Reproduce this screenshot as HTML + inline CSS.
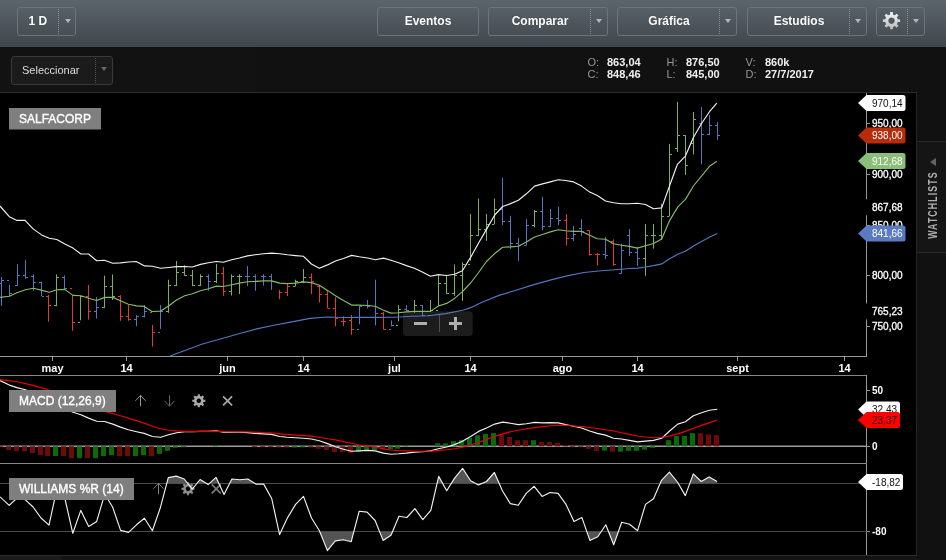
<!DOCTYPE html>
<html lang="es"><head><meta charset="utf-8"><title>SALFACORP</title>
<style>
html,body{margin:0;padding:0}
body{width:946px;height:560px;overflow:hidden;background:#121212;font-family:"Liberation Sans",Arial,sans-serif;position:relative}
.tb{position:absolute;left:0;top:0;width:946px;height:47px;background:linear-gradient(#5d666d,#40484d)}
.btn{position:absolute;top:7px;height:27px;border:1px solid #6d767b;border-radius:3px;color:#fff;font-weight:bold;font-size:12px;line-height:27px;text-align:center;box-sizing:content-box}
.btn span{position:absolute;left:0;top:0;height:27px;text-shadow:0 0 1px rgba(0,0,0,.4)}
.btn i{position:absolute;top:1px;bottom:1px;width:0;border-left:1px dotted #8a9297}
.btn b{position:absolute;top:11px;width:0;height:0;border-left:3.5px solid transparent;border-right:3.5px solid transparent;border-top:4px solid #b4b9bc}
.sub{position:absolute;left:0;top:47px;width:946px;height:45px;background:#121212}
.sel{position:absolute;left:11px;top:56px;width:100px;height:27px;border:1px solid #3a3a3a;border-radius:3px;background:#1c1c1c;color:#ddd;font-size:11px;line-height:27px}
.sel span{position:absolute;left:10px;top:0}
.sel i{position:absolute;left:83px;top:1px;bottom:1px;width:0;border-left:1px dotted #555}
.sel b{position:absolute;left:88.5px;top:10px;width:0;height:0;border-left:3.5px solid transparent;border-right:3.5px solid transparent;border-top:4px solid #666}
.ohlc{position:absolute;top:56px;font-size:11px;line-height:12px;color:#999;white-space:pre}
.ohlc b{color:#f0f0f0;position:absolute;left:19.5px}
.ohlc div{position:relative;height:12px}
.hr{position:absolute;left:0;top:92px;width:917px;height:1px;background:#2e2e2e}
.chart{position:absolute;left:0;top:93px}
.side{position:absolute;left:916px;top:93px;width:30px;height:467px;background:#121212;border-left:1px solid #262626;box-sizing:border-box}
.tab{position:absolute;left:0;top:48px;width:29px;height:110px;background:#161616;border-top:1px solid #2a2a2a;border-bottom:1px solid #2a2a2a}
.tab span{position:absolute;left:-26px;top:48px;width:80px;height:14px;transform:rotate(-90deg);font-size:10px;font-weight:bold;letter-spacing:1px;color:#9a9a9a;line-height:14px;text-align:center;white-space:nowrap}
.tab b{position:absolute;left:12.5px;top:15.8px;width:0;height:0;border-top:4.2px solid transparent;border-bottom:4.2px solid transparent;border-right:6.5px solid #666}
.bot{position:absolute;left:0;top:555px;width:917px;height:5px;background:#151515;border-top:1px solid #2c2c2c;box-sizing:border-box}
.bot i{position:absolute;left:0;top:0;width:61px;height:4px;background:#1c1c1c}
#wrap{position:absolute;left:0;top:0;width:946px;height:560px;will-change:transform;opacity:.999}
</style></head><body>
<div id="wrap">
<div class="tb">
 <div class="btn" style="left:17px;width:57px"><span style="width:39.5px">1 D</span><i style="left:40px"></i><b style="left:46.5px"></b></div>
 <div class="btn" style="left:377px;width:100px"><span style="width:100px">Eventos</span></div>
 <div class="btn" style="left:488px;width:118px"><span style="width:102px">Comparar</span><i style="left:100.5px"></i><b style="left:107px"></b></div>
 <div class="btn" style="left:617px;width:118px"><span style="width:102px">Gráfica</span><i style="left:100.5px"></i><b style="left:107px"></b></div>
 <div class="btn" style="left:747px;width:118px"><span style="width:102px">Estudios</span><i style="left:100.5px"></i><b style="left:107px"></b></div>
 <div class="btn" style="left:876px;width:47px"><svg width="31" height="27" viewBox="-15.5 -12.7 31 27" style="position:absolute;left:-1px;top:0"><defs><linearGradient id="gg" x1="0" y1="0" x2="0" y2="1"><stop offset="0" stop-color="#f4f4f4"/><stop offset="1" stop-color="#b8bcbf"/></linearGradient></defs><path d="M-1.40,-6.25L-1.29,-8.60L1.29,-8.60L1.40,-6.25L3.43,-5.40L5.17,-7.00L7.00,-5.17L5.40,-3.43L6.25,-1.40L8.60,-1.29L8.60,1.29L6.25,1.40L5.40,3.43L7.00,5.17L5.17,7.00L3.43,5.40L1.40,6.25L1.29,8.60L-1.29,8.60L-1.40,6.25L-3.43,5.40L-5.17,7.00L-7.00,5.17L-5.40,3.43L-6.25,1.40L-8.60,1.29L-8.60,-1.29L-6.25,-1.40L-5.40,-3.43L-7.00,-5.17L-5.17,-7.00L-3.43,-5.40ZM0,-3.2a3.2,3.2 0 1 0 .01,0z" fill="url(#gg)" fill-rule="evenodd"/></svg><i style="left:29.5px"></i><b style="left:36px"></b></div>
</div>
<div class="sub"></div>
<div class="sel"><span>Seleccionar</span><i></i><b></b></div>
<div class="ohlc" style="left:587.5px"><div>O:<b>863,04</b></div><div>C:<b>848,46</b></div></div>
<div class="ohlc" style="left:666.5px"><div>H:<b>876,50</b></div><div>L:<b>845,00</b></div></div>
<div class="ohlc" style="left:745.5px"><div>V:<b>860k</b></div><div>D:<b>27/7/2017</b></div></div>
<div class="hr"></div>
<svg class="chart" width="917" height="464" viewBox="0 93 917 464" font-family="'Liberation Sans', Arial, sans-serif">
<rect x="0" y="93" width="916" height="463" fill="#000"/>
<g stroke="#999" stroke-width="1" shape-rendering="crispEdges" fill="none">
<line x1="0" y1="356.5" x2="867" y2="356.5"/>
<line x1="866.5" y1="93" x2="866.5" y2="356"/>
<line x1="0" y1="375.5" x2="867" y2="375.5" stroke="#888"/>
<line x1="866.5" y1="375" x2="866.5" y2="556"/>
<line x1="0" y1="463.5" x2="867" y2="463.5" stroke="#888"/>
<line x1="52.5" y1="357" x2="52.5" y2="361"/>
<line x1="126.5" y1="357" x2="126.5" y2="361"/>
<line x1="227.5" y1="357" x2="227.5" y2="361"/>
<line x1="303.5" y1="357" x2="303.5" y2="361"/>
<line x1="394.5" y1="357" x2="394.5" y2="361"/>
<line x1="470.5" y1="357" x2="470.5" y2="361"/>
<line x1="562.5" y1="357" x2="562.5" y2="361"/>
<line x1="637.5" y1="357" x2="637.5" y2="361"/>
<line x1="737.5" y1="357" x2="737.5" y2="361"/>
<line x1="844.5" y1="357" x2="844.5" y2="361"/>
<line x1="867" y1="123.5" x2="870" y2="123.5"/>
<line x1="867" y1="174.5" x2="870" y2="174.5"/>
<line x1="867" y1="225.5" x2="870" y2="225.5"/>
<line x1="867" y1="275.5" x2="870" y2="275.5"/>
<line x1="867" y1="326.5" x2="870" y2="326.5"/>
<line x1="867" y1="390.5" x2="870" y2="390.5"/>
<line x1="867" y1="446.5" x2="870" y2="446.5"/>
<line x1="867" y1="531.5" x2="870" y2="531.5"/>
</g>
<rect x="403" y="311.3" width="69.7" height="24.7" rx="3.5" fill="#1d1d1d"/>
<rect x="414" y="322" width="13" height="3" fill="#b0b0b0"/>
<rect x="439" y="315" width="1" height="17" fill="#505050"/>
<rect x="449" y="322" width="13" height="3" fill="#b0b0b0"/><rect x="454" y="317" width="3" height="13" fill="#b0b0b0"/>
<path d="M1.5 277.0V305.9M-1.0 283.5H1.0M2.0 280.5H4.0" stroke="#5677c2" stroke-width="1" fill="none"/>
<path d="M9.5 284.7V296.6M7.0 280.5H9.0M10.0 293.5H12.0" stroke="#5677c2" stroke-width="1" fill="none"/>
<path d="M17.5 264.3V285.9M15.0 285.5H17.0M18.0 275.5H20.0" stroke="#5677c2" stroke-width="1" fill="none"/>
<path d="M25.5 260.1V278.8M23.0 275.5H25.0M26.0 277.5H28.0" stroke="#5677c2" stroke-width="1" fill="none"/>
<path d="M33.5 274.5V290.6M31.0 276.5H33.0M34.0 282.5H36.0" stroke="#5677c2" stroke-width="1" fill="none"/>
<path d="M41.5 281.6V296.2M39.0 282.5H41.0M42.0 296.5H44.0" stroke="#5677c2" stroke-width="1" fill="none"/>
<path d="M48.5 294.9V321.7M46.0 296.5H48.0M49.0 305.5H51.0" stroke="#e23b30" stroke-width="1" fill="none"/>
<path d="M56.5 274.5V306.2M54.0 305.5H56.0M57.0 277.5H59.0" stroke="#7ab35c" stroke-width="1" fill="none"/>
<path d="M64.5 275.4V288.9M62.0 277.5H64.0M65.0 288.5H67.0" stroke="#5677c2" stroke-width="1" fill="none"/>
<path d="M72.5 295.2V330.8M70.0 288.5H72.0M73.0 322.5H75.0" stroke="#e23b30" stroke-width="1" fill="none"/>
<path d="M80.5 295.7V320.3M78.0 322.5H80.0M81.0 296.5H83.0" stroke="#7ab35c" stroke-width="1" fill="none"/>
<path d="M88.5 285.0V319.5M86.0 296.5H88.0M89.0 311.5H91.0" stroke="#e23b30" stroke-width="1" fill="none"/>
<path d="M96.5 297.1V318.6M94.0 311.5H96.0M97.0 307.5H99.0" stroke="#5677c2" stroke-width="1" fill="none"/>
<path d="M104.5 275.7V307.9M102.0 307.5H104.0M105.0 286.5H107.0" stroke="#7ab35c" stroke-width="1" fill="none"/>
<path d="M112.5 274.5V300.0M110.0 286.5H112.0M113.0 296.5H115.0" stroke="#7ab35c" stroke-width="1" fill="none"/>
<path d="M120.5 295.2V320.8M118.0 296.5H120.0M121.0 316.5H123.0" stroke="#e23b30" stroke-width="1" fill="none"/>
<path d="M128.5 305.0V320.8M126.0 316.5H128.0M129.0 319.5H131.0" stroke="#e23b30" stroke-width="1" fill="none"/>
<path d="M136.5 315.2V326.3M134.0 319.5H136.0M137.0 316.5H139.0" stroke="#5677c2" stroke-width="1" fill="none"/>
<path d="M144.5 305.0V317.4M142.0 316.5H144.0M145.0 311.5H147.0" stroke="#5677c2" stroke-width="1" fill="none"/>
<path d="M152.5 325.0V346.6M150.0 312.5H152.0M153.0 332.5H155.0" stroke="#e23b30" stroke-width="1" fill="none"/>
<path d="M160.5 305.1V328.9M158.0 332.5H160.0M161.0 311.5H163.0" stroke="#5677c2" stroke-width="1" fill="none"/>
<path d="M168.5 279.7V312.8M166.0 311.5H168.0M169.0 285.5H171.0" stroke="#7ab35c" stroke-width="1" fill="none"/>
<path d="M176.5 261.0V286.1M174.0 285.5H176.0M177.0 272.5H179.0" stroke="#7ab35c" stroke-width="1" fill="none"/>
<path d="M184.5 265.3V275.8M182.0 272.5H184.0M185.0 275.5H187.0" stroke="#7ab35c" stroke-width="1" fill="none"/>
<path d="M192.5 270.0V286.1M190.0 275.5H192.0M193.0 285.5H195.0" stroke="#7ab35c" stroke-width="1" fill="none"/>
<path d="M200.5 274.3V286.1M198.0 285.5H200.0M201.0 276.5H203.0" stroke="#7ab35c" stroke-width="1" fill="none"/>
<path d="M208.5 274.3V290.7M206.0 276.5H208.0M209.0 281.5H211.0" stroke="#5677c2" stroke-width="1" fill="none"/>
<path d="M216.5 263.9V283.1M214.0 281.5H216.0M217.0 273.5H219.0" stroke="#7ab35c" stroke-width="1" fill="none"/>
<path d="M223.5 267.0V295.8M221.0 273.5H223.0M224.0 291.5H226.0" stroke="#e23b30" stroke-width="1" fill="none"/>
<path d="M231.5 274.3V295.5M229.0 291.5H231.0M232.0 276.5H234.0" stroke="#7ab35c" stroke-width="1" fill="none"/>
<path d="M239.5 274.3V294.1M237.0 276.5H239.0M240.0 276.5H242.0" stroke="#7ab35c" stroke-width="1" fill="none"/>
<path d="M247.5 266.1V286.0M245.0 276.5H247.0M248.0 276.5H250.0" stroke="#5677c2" stroke-width="1" fill="none"/>
<path d="M255.5 274.3V290.7M253.0 276.5H255.0M256.0 281.5H258.0" stroke="#5677c2" stroke-width="1" fill="none"/>
<path d="M263.5 274.3V285.6M261.0 276.5H263.0M264.0 276.5H266.0" stroke="#5677c2" stroke-width="1" fill="none"/>
<path d="M271.5 273.8V289.9M269.0 276.5H271.0M272.0 281.5H274.0" stroke="#5677c2" stroke-width="1" fill="none"/>
<path d="M279.5 289.9V299.2M277.0 282.5H279.0M280.0 292.5H282.0" stroke="#e23b30" stroke-width="1" fill="none"/>
<path d="M287.5 283.1V296.1M285.0 292.5H287.0M288.0 286.5H290.0" stroke="#e23b30" stroke-width="1" fill="none"/>
<path d="M295.5 279.7V286.5M293.0 286.5H295.0M296.0 281.5H298.0" stroke="#7ab35c" stroke-width="1" fill="none"/>
<path d="M303.5 269.0V283.1M301.0 281.5H303.0M304.0 277.5H306.0" stroke="#7ab35c" stroke-width="1" fill="none"/>
<path d="M311.5 273.4V294.1M309.0 277.5H311.0M312.0 281.5H314.0" stroke="#e23b30" stroke-width="1" fill="none"/>
<path d="M319.5 284.8V302.6M317.0 286.5H319.0M320.0 294.5H322.0" stroke="#e23b30" stroke-width="1" fill="none"/>
<path d="M327.5 289.9V308.5M325.0 294.5H327.0M328.0 308.5H330.0" stroke="#e23b30" stroke-width="1" fill="none"/>
<path d="M335.5 297.5V326.3M333.0 308.5H335.0M336.0 318.5H338.0" stroke="#e23b30" stroke-width="1" fill="none"/>
<path d="M343.5 316.2V326.3M341.0 321.5H343.0M344.0 321.5H346.0" stroke="#e23b30" stroke-width="1" fill="none"/>
<path d="M351.5 315.0V334.8M349.0 320.5H351.0M352.0 329.5H354.0" stroke="#e23b30" stroke-width="1" fill="none"/>
<path d="M359.5 306.0V324.3M357.0 329.5H359.0M360.0 306.5H362.0" stroke="#5677c2" stroke-width="1" fill="none"/>
<path d="M367.5 300.0V308.5M365.0 305.5H367.0M368.0 306.5H370.0" stroke="#5677c2" stroke-width="1" fill="none"/>
<path d="M375.5 279.7V325.5M376.0 313.5H378.0" stroke="#5677c2" stroke-width="1" fill="none"/>
<path d="M383.5 311.9V329.7M381.0 313.5H383.0M384.0 329.5H386.0" stroke="#e23b30" stroke-width="1" fill="none"/>
<path d="M391.5 320.4V326.3M389.0 329.5H391.0M392.0 325.5H394.0" stroke="#5677c2" stroke-width="1" fill="none"/>
<path d="M398.5 305.1V321.3M396.0 325.5H398.0M399.0 309.5H401.0" stroke="#7ab35c" stroke-width="1" fill="none"/>
<path d="M406.5 305.1V311.1M404.0 309.5H406.0M407.0 310.5H409.0" stroke="#5677c2" stroke-width="1" fill="none"/>
<path d="M414.5 300.0V312.8M412.0 311.5H414.0M415.0 305.5H417.0" stroke="#7ab35c" stroke-width="1" fill="none"/>
<path d="M422.5 305.1V316.2M420.0 305.5H422.0M423.0 315.5H425.0" stroke="#5677c2" stroke-width="1" fill="none"/>
<path d="M430.5 300.0V311.9M428.0 315.5H430.0M431.0 310.5H433.0" stroke="#7ab35c" stroke-width="1" fill="none"/>
<path d="M438.5 275.5V306.0M436.0 310.5H438.0M439.0 283.5H441.0" stroke="#7ab35c" stroke-width="1" fill="none"/>
<path d="M446.5 275.5V294.1M444.0 283.5H446.0M447.0 293.5H449.0" stroke="#7ab35c" stroke-width="1" fill="none"/>
<path d="M454.5 264.4V295.8M452.0 293.5H454.0M455.0 275.5H457.0" stroke="#7ab35c" stroke-width="1" fill="none"/>
<path d="M462.5 262.2V300.9M460.0 275.5H462.0M463.0 264.5H465.0" stroke="#7ab35c" stroke-width="1" fill="none"/>
<path d="M470.5 214.1V260.6M468.0 264.5H470.0M471.0 235.5H473.0" stroke="#7ab35c" stroke-width="1" fill="none"/>
<path d="M478.5 198.5V236.2M476.0 235.5H478.0M479.0 229.5H481.0" stroke="#7ab35c" stroke-width="1" fill="none"/>
<path d="M486.5 214.1V240.9M484.0 229.5H486.0M487.0 224.5H489.0" stroke="#7ab35c" stroke-width="1" fill="none"/>
<path d="M494.5 198.5V224.3M492.0 224.5H494.0M495.0 209.5H497.0" stroke="#7ab35c" stroke-width="1" fill="none"/>
<path d="M502.5 178.0V225.1M500.0 209.5H502.0M503.0 221.5H505.0" stroke="#5677c2" stroke-width="1" fill="none"/>
<path d="M510.5 215.8V248.9M508.0 221.5H510.0M511.0 243.5H513.0" stroke="#5677c2" stroke-width="1" fill="none"/>
<path d="M518.5 237.9V260.8M516.0 243.5H518.0M519.0 245.5H521.0" stroke="#5677c2" stroke-width="1" fill="none"/>
<path d="M526.5 219.2V245.5M524.0 245.5H526.0M527.0 225.5H529.0" stroke="#5677c2" stroke-width="1" fill="none"/>
<path d="M534.5 209.9V227.3M532.0 225.5H534.0M535.0 211.5H537.0" stroke="#7ab35c" stroke-width="1" fill="none"/>
<path d="M542.5 196.8V230.2M540.0 211.5H542.0M543.0 226.5H545.0" stroke="#5677c2" stroke-width="1" fill="none"/>
<path d="M550.5 209.0V226.8M548.0 226.5H550.0M551.0 218.5H553.0" stroke="#5677c2" stroke-width="1" fill="none"/>
<path d="M558.5 206.5V225.1M556.0 218.5H558.0M559.0 220.5H561.0" stroke="#5677c2" stroke-width="1" fill="none"/>
<path d="M566.5 214.1V245.5M564.0 220.5H566.0M567.0 238.5H569.0" stroke="#e23b30" stroke-width="1" fill="none"/>
<path d="M573.5 226.0V240.9M571.0 238.5H573.0M574.0 234.5H576.0" stroke="#5677c2" stroke-width="1" fill="none"/>
<path d="M581.5 219.2V235.8M579.0 228.5H581.0M582.0 231.5H584.0" stroke="#5677c2" stroke-width="1" fill="none"/>
<path d="M589.5 230.2V255.7M587.0 230.5H589.0M590.0 254.5H592.0" stroke="#e23b30" stroke-width="1" fill="none"/>
<path d="M597.5 252.8V265.7M595.0 254.5H597.0M598.0 254.5H600.0" stroke="#e23b30" stroke-width="1" fill="none"/>
<path d="M605.5 237.0V259.1M603.0 254.5H605.0M606.0 255.5H608.0" stroke="#5677c2" stroke-width="1" fill="none"/>
<path d="M613.5 239.4V265.7M611.0 241.5H613.0M614.0 264.5H616.0" stroke="#e23b30" stroke-width="1" fill="none"/>
<path d="M621.5 243.7V273.9M619.0 273.5H621.0M622.0 250.5H624.0" stroke="#5677c2" stroke-width="1" fill="none"/>
<path d="M629.5 229.1V255.9M627.0 235.5H629.0M630.0 252.5H632.0" stroke="#5677c2" stroke-width="1" fill="none"/>
<path d="M637.5 246.9V266.1M635.0 252.5H637.0M638.0 258.5H640.0" stroke="#5677c2" stroke-width="1" fill="none"/>
<path d="M645.5 224.0V275.8M643.0 258.5H645.0M646.0 235.5H648.0" stroke="#7ab35c" stroke-width="1" fill="none"/>
<path d="M653.5 224.0V248.6M651.0 235.5H653.0M654.0 235.5H656.0" stroke="#7ab35c" stroke-width="1" fill="none"/>
<path d="M661.5 203.7V240.1M659.0 235.5H661.0M662.0 216.5H664.0" stroke="#7ab35c" stroke-width="1" fill="none"/>
<path d="M669.5 143.9V216.4M667.0 216.5H669.0M670.0 154.5H672.0" stroke="#7ab35c" stroke-width="1" fill="none"/>
<path d="M677.5 101.8V152.0M675.0 148.5H677.0M678.0 135.5H680.0" stroke="#7ab35c" stroke-width="1" fill="none"/>
<path d="M685.5 135.1V174.8M683.0 135.5H685.0M686.0 165.5H688.0" stroke="#7ab35c" stroke-width="1" fill="none"/>
<path d="M693.5 112.0V154.4M691.0 143.5H693.0M694.0 119.5H696.0" stroke="#7ab35c" stroke-width="1" fill="none"/>
<path d="M701.5 107.1V164.3M699.0 123.5H701.0M702.0 134.5H704.0" stroke="#5677c2" stroke-width="1" fill="none"/>
<path d="M709.5 115.1V135.1M707.0 134.5H709.0M710.0 125.5H712.0" stroke="#5677c2" stroke-width="1" fill="none"/>
<path d="M717.5 122.2V139.7M715.0 125.5H717.0M718.0 135.5H720.0" stroke="#5677c2" stroke-width="1" fill="none"/>
<polyline points="170.0,356.0 201.7,344.2 222.9,338.2 239.8,333.5 256.8,328.9 273.8,325.2 290.7,322.1 310.0,318.4 327.0,317.0 344.0,317.5 361.0,317.4 378.0,317.4 395.0,317.2 411.8,316.2 428.8,315.8 445.7,313.6 462.7,310.2 470.0,307.9 482.0,302.2 499.0,295.4 516.0,290.3 533.0,284.9 550.0,280.1 567.0,275.9 584.0,272.5 601.0,270.8 615.0,269.8 621.4,269.3 629.4,268.5 637.4,268.1 645.5,267.0 653.5,265.6 661.7,263.9 669.6,258.8 677.7,254.2 685.4,251.2 693.9,245.7 701.5,241.5 709.2,237.3 717.3,233.4" fill="none" stroke="#5677c2" stroke-width="1.15" stroke-linejoin="round"/>
<polyline points="0.0,297.4 9.3,296.2 17.0,292.7 25.4,289.8 33.4,288.3 41.2,290.1 49.2,292.3 56.8,289.8 64.8,289.4 73.0,295.4 80.9,295.7 88.6,298.3 96.7,300.5 104.7,297.4 112.8,297.4 120.5,300.8 128.4,304.2 136.6,305.9 144.2,306.4 151.9,311.5 160.6,311.1 168.6,306.0 176.5,300.0 184.7,295.8 192.3,293.8 200.5,290.7 208.4,288.7 216.4,286.1 223.4,286.5 231.7,284.8 239.5,283.1 247.5,281.7 255.4,281.4 263.6,280.9 271.6,280.9 279.7,283.1 287.3,283.6 295.5,283.1 303.5,281.9 311.4,282.6 319.3,285.3 327.5,290.4 335.4,295.8 343.4,300.6 351.6,305.1 359.2,305.1 367.7,305.5 375.3,306.3 383.5,310.2 390.9,313.1 398.6,312.8 406.4,311.9 414.3,311.4 422.3,311.4 430.5,311.4 438.4,306.0 446.6,303.4 454.6,298.4 462.4,291.6 470.6,283.0 478.6,272.5 486.5,261.5 494.7,253.5 502.7,247.3 510.5,246.9 518.4,246.3 526.4,242.1 534.6,237.0 542.5,234.5 550.3,231.9 558.3,229.7 565.6,230.7 573.6,231.4 581.6,231.4 589.7,235.3 597.3,238.7 605.5,239.2 613.5,243.8 621.4,245.2 629.4,246.4 637.4,248.1 645.5,245.7 653.5,243.5 661.7,239.0 669.6,220.6 677.7,207.1 685.4,199.4 693.4,186.0 701.5,176.1 709.5,166.3 716.8,161.2" fill="none" stroke="#86bd6b" stroke-width="1.15" stroke-linejoin="round"/>
<polyline points="0.0,206.0 9.3,216.7 17.0,220.4 25.1,220.4 33.1,228.9 41.6,234.9 49.2,238.3 56.8,239.5 65.3,244.2 73.0,248.1 80.9,254.0 88.6,254.0 96.7,260.7 104.3,260.3 112.8,263.2 120.5,262.9 128.4,262.0 136.2,261.5 144.6,265.9 152.4,266.3 160.6,268.3 168.6,267.5 176.5,266.6 184.7,266.5 192.3,267.0 200.5,264.4 208.4,262.7 216.4,261.5 223.4,262.2 231.7,259.8 239.5,258.0 247.5,255.9 255.4,254.8 263.6,253.7 271.6,253.1 279.7,253.7 287.3,254.8 295.5,255.6 303.5,256.3 311.4,264.0 319.3,268.3 327.5,264.9 335.4,261.0 343.4,258.5 351.6,255.4 359.2,256.8 367.7,258.0 375.3,259.8 383.5,258.1 390.9,260.2 398.6,262.7 406.4,265.6 414.3,268.3 422.3,272.1 430.5,276.3 438.4,274.6 446.6,275.5 454.6,274.3 462.4,270.7 470.6,257.4 478.6,243.0 486.5,229.4 494.7,215.0 502.7,206.5 510.5,203.6 518.4,200.2 526.4,193.8 534.6,186.1 542.5,183.9 550.3,181.9 558.3,179.8 565.6,180.5 573.6,181.9 581.6,186.1 589.7,192.1 597.3,195.5 605.5,201.0 613.5,202.7 621.4,203.7 629.4,203.7 637.4,203.3 645.5,204.5 653.5,208.8 661.7,207.9 669.6,185.8 677.4,164.3 685.4,156.1 693.4,137.5 701.5,123.5 709.5,111.7 716.8,103.2" fill="none" stroke="#f2f2f2" stroke-width="1.15" stroke-linejoin="round"/>
<line x1="0" y1="446.3" x2="867" y2="446.3" stroke="#9c9c9c" stroke-width="1.5"/>
<rect x="-2" y="446.3" width="5" height="1.0" fill="#6e0b0b"/>
<rect x="6" y="446.3" width="5" height="3.7" fill="#6e0b0b"/>
<rect x="14" y="446.3" width="5" height="4.9" fill="#6e0b0b"/>
<rect x="22" y="446.3" width="5" height="4.9" fill="#6e0b0b"/>
<rect x="30" y="446.3" width="5" height="6.8" fill="#6e0b0b"/>
<rect x="38" y="446.3" width="5" height="8.8" fill="#6e0b0b"/>
<rect x="45" y="446.3" width="5" height="9.7" fill="#6e0b0b"/>
<rect x="53" y="446.3" width="5" height="9.7" fill="#0b6b0b"/>
<rect x="61" y="446.3" width="5" height="9.7" fill="#6e0b0b"/>
<rect x="69" y="446.3" width="5" height="11.9" fill="#6e0b0b"/>
<rect x="77" y="446.3" width="5" height="11.9" fill="#0b6b0b"/>
<rect x="85" y="446.3" width="5" height="11.9" fill="#6e0b0b"/>
<rect x="93" y="446.3" width="5" height="11.9" fill="#0b6b0b"/>
<rect x="101" y="446.3" width="5" height="9.7" fill="#0b6b0b"/>
<rect x="109" y="446.3" width="5" height="8.8" fill="#0b6b0b"/>
<rect x="117" y="446.3" width="5" height="9.7" fill="#6e0b0b"/>
<rect x="125" y="446.3" width="5" height="9.7" fill="#6e0b0b"/>
<rect x="133" y="446.3" width="5" height="9.7" fill="#0b6b0b"/>
<rect x="141" y="446.3" width="5" height="8.8" fill="#0b6b0b"/>
<rect x="149" y="446.3" width="5" height="9.7" fill="#6e0b0b"/>
<rect x="157" y="446.3" width="5" height="7.5" fill="#0b6b0b"/>
<rect x="165" y="446.3" width="5" height="4.6" fill="#0b6b0b"/>
<rect x="173" y="446.3" width="5" height="1.5" fill="#0b6b0b"/>
<rect x="181" y="446.3" width="5" height="1.0" fill="#0b6b0b"/>
<rect x="213" y="445.2" width="5" height="1.1" fill="#0b6b0b"/>
<rect x="252" y="446.3" width="5" height="1.0" fill="#6e0b0b"/>
<rect x="260" y="446.3" width="5" height="1.0" fill="#6e0b0b"/>
<rect x="268" y="446.3" width="5" height="1.0" fill="#6e0b0b"/>
<rect x="276" y="446.3" width="5" height="1.3" fill="#6e0b0b"/>
<rect x="284" y="446.3" width="5" height="1.3" fill="#6e0b0b"/>
<rect x="292" y="446.3" width="5" height="1.3" fill="#0b6b0b"/>
<rect x="300" y="446.3" width="5" height="1.1" fill="#0b6b0b"/>
<rect x="308" y="446.3" width="5" height="1.3" fill="#6e0b0b"/>
<rect x="316" y="446.3" width="5" height="2.6" fill="#6e0b0b"/>
<rect x="324" y="446.3" width="5" height="3.7" fill="#6e0b0b"/>
<rect x="332" y="446.3" width="5" height="5.8" fill="#6e0b0b"/>
<rect x="340" y="446.3" width="5" height="5.8" fill="#6e0b0b"/>
<rect x="348" y="446.3" width="5" height="6.8" fill="#6e0b0b"/>
<rect x="356" y="446.3" width="5" height="5.4" fill="#0b6b0b"/>
<rect x="364" y="446.3" width="5" height="3.7" fill="#0b6b0b"/>
<rect x="372" y="446.3" width="5" height="3.7" fill="#0b6b0b"/>
<rect x="380" y="446.3" width="5" height="3.2" fill="#6e0b0b"/>
<rect x="388" y="446.3" width="5" height="2.9" fill="#0b6b0b"/>
<rect x="395" y="446.3" width="5" height="2.4" fill="#0b6b0b"/>
<rect x="403" y="445.3" width="5" height="1.0" fill="#0b6b0b"/>
<rect x="435" y="443.3" width="5" height="3.0" fill="#0b6b0b"/>
<rect x="443" y="443.3" width="5" height="3.0" fill="#0b6b0b"/>
<rect x="451" y="441.1" width="5" height="5.2" fill="#0b6b0b"/>
<rect x="459" y="439.9" width="5" height="6.4" fill="#0b6b0b"/>
<rect x="467" y="437.8" width="5" height="8.5" fill="#0b6b0b"/>
<rect x="475" y="435.3" width="5" height="11.0" fill="#0b6b0b"/>
<rect x="483" y="433.9" width="5" height="12.4" fill="#0b6b0b"/>
<rect x="491" y="433.1" width="5" height="13.2" fill="#0b6b0b"/>
<rect x="499" y="434.3" width="5" height="12.0" fill="#6e0b0b"/>
<rect x="507" y="437.0" width="5" height="9.3" fill="#6e0b0b"/>
<rect x="515" y="440.2" width="5" height="6.1" fill="#6e0b0b"/>
<rect x="523" y="440.2" width="5" height="6.1" fill="#6e0b0b"/>
<rect x="531" y="440.2" width="5" height="6.1" fill="#0b6b0b"/>
<rect x="539" y="441.9" width="5" height="4.4" fill="#6e0b0b"/>
<rect x="547" y="441.9" width="5" height="4.4" fill="#6e0b0b"/>
<rect x="555" y="442.9" width="5" height="3.4" fill="#6e0b0b"/>
<rect x="563" y="445.0" width="5" height="1.3" fill="#6e0b0b"/>
<rect x="570" y="446.3" width="5" height="1.0" fill="#6e0b0b"/>
<rect x="578" y="446.3" width="5" height="1.0" fill="#6e0b0b"/>
<rect x="586" y="446.3" width="5" height="2.6" fill="#6e0b0b"/>
<rect x="594" y="446.3" width="5" height="4.6" fill="#6e0b0b"/>
<rect x="602" y="446.3" width="5" height="4.3" fill="#0b6b0b"/>
<rect x="610" y="446.3" width="5" height="5.4" fill="#6e0b0b"/>
<rect x="618" y="446.3" width="5" height="5.4" fill="#0b6b0b"/>
<rect x="626" y="446.3" width="5" height="4.6" fill="#0b6b0b"/>
<rect x="634" y="446.3" width="5" height="4.6" fill="#0b6b0b"/>
<rect x="642" y="446.3" width="5" height="3.4" fill="#0b6b0b"/>
<rect x="650" y="446.3" width="5" height="1.5" fill="#0b6b0b"/>
<rect x="666" y="440.2" width="5" height="6.1" fill="#0b6b0b"/>
<rect x="674" y="436.0" width="5" height="10.3" fill="#0b6b0b"/>
<rect x="682" y="436.0" width="5" height="10.3" fill="#0b6b0b"/>
<rect x="690" y="433.1" width="5" height="13.2" fill="#0b6b0b"/>
<rect x="698" y="433.1" width="5" height="13.2" fill="#6e0b0b"/>
<rect x="706" y="434.3" width="5" height="12.0" fill="#6e0b0b"/>
<rect x="714" y="435.1" width="5" height="11.2" fill="#6e0b0b"/>
<polyline points="0.0,380.5 9.3,385.1 17.0,387.6 25.4,389.8 33.4,392.5 41.3,396.5 49.2,400.5 57.2,404.5 65.1,408.5 73.0,412.2 80.9,414.8 88.6,418.1 96.7,421.2 104.7,421.5 112.8,424.1 120.5,427.1 128.4,429.7 136.6,431.7 144.2,433.4 152.4,436.5 160.6,437.3 168.6,434.8 176.5,432.7 184.7,431.7 192.3,431.7 200.5,431.4 208.4,431.4 216.4,430.9 223.4,432.2 231.7,432.2 239.5,432.2 247.5,432.6 255.4,433.4 263.6,433.9 271.6,434.4 279.7,436.5 287.3,437.3 295.5,437.8 303.5,438.2 311.4,439.0 319.3,440.7 327.5,443.6 335.4,446.7 343.4,449.2 351.6,451.2 359.2,450.9 367.7,450.4 375.3,450.9 383.5,453.1 390.9,454.3 398.6,453.8 406.4,453.1 414.3,452.1 422.3,451.7 430.5,450.9 438.4,448.7 446.6,447.0 454.6,444.6 462.4,441.2 470.6,436.5 478.6,431.4 486.5,428.0 494.7,424.1 502.7,422.1 510.5,423.2 518.4,424.6 526.4,423.7 534.6,422.4 542.5,422.9 550.3,422.6 558.3,422.9 565.6,424.6 573.6,426.3 581.6,428.0 589.7,431.0 597.3,433.4 605.5,435.1 613.5,438.2 621.4,439.0 629.4,440.4 637.4,441.9 645.5,441.1 653.5,440.4 661.7,438.2 669.6,431.0 677.7,424.1 685.4,421.7 693.4,415.8 701.5,412.7 709.5,410.2 717.3,409.3" fill="none" stroke="#f2f2f2" stroke-width="1.15" stroke-linejoin="round"/>
<polyline points="0.0,379.6 17.0,381.8 33.9,385.6 45.8,389.0 57.0,392.8 73.0,399.2 90.0,405.5 106.9,411.9 118.8,415.3 135.7,420.4 152.7,426.3 160.6,428.8 168.6,430.2 176.5,430.9 184.7,431.4 200.5,431.4 216.4,431.4 231.7,431.7 247.5,431.9 263.6,432.6 271.6,432.7 279.7,433.9 295.5,435.1 311.4,436.1 319.3,437.3 327.5,438.7 335.4,439.9 343.4,441.6 351.6,443.3 359.2,445.0 367.7,446.1 375.3,447.2 383.5,448.9 390.9,450.0 398.6,450.6 406.4,450.9 414.3,451.2 422.3,451.2 430.5,451.2 438.4,450.4 446.6,449.7 454.6,448.7 462.4,447.2 470.6,445.0 478.6,442.4 486.5,439.4 494.7,436.5 502.7,433.9 510.5,431.7 518.4,430.2 526.4,428.8 534.6,427.6 542.5,426.6 550.3,425.8 558.3,425.4 565.6,425.4 573.6,426.0 581.6,426.6 589.7,427.5 597.3,428.5 605.5,429.7 613.5,431.0 621.4,432.7 629.4,434.4 637.4,436.0 645.5,437.0 653.5,437.7 661.7,437.3 669.6,436.1 677.7,433.9 685.4,431.4 693.4,428.3 701.5,425.4 709.5,422.6 717.3,420.0" fill="none" stroke="#f00000" stroke-width="1.15" stroke-linejoin="round"/>
<line x1="0" y1="483.5" x2="867" y2="483.5" stroke="#4a4a4a" stroke-width="1" shape-rendering="crispEdges"/>
<line x1="0" y1="531.5" x2="867" y2="531.5" stroke="#4a4a4a" stroke-width="1" shape-rendering="crispEdges"/>
<defs><clipPath id="ct"><rect x="0" y="464" width="867" height="19.5"/></clipPath><clipPath id="cb"><rect x="0" y="531.5" width="867" height="25"/></clipPath></defs>
<polygon points="0,483.5 0.0,496.8 9.2,505.3 17.1,498.0 25.1,499.7 33.1,507.0 41.0,518.0 49.0,525.1 56.9,488.6 64.9,498.5 72.8,533.3 80.8,510.4 88.7,526.5 96.7,521.4 104.7,494.2 112.6,507.0 120.6,530.4 128.5,532.4 136.5,524.8 144.4,518.3 152.4,530.7 160.3,507.8 168.3,477.6 176.2,476.1 184.2,479.0 192.2,489.1 200.1,479.5 208.1,484.6 216.0,477.3 224.0,494.6 231.9,479.0 239.9,479.8 247.8,479.0 255.8,484.1 263.7,484.1 271.7,498.5 279.6,534.6 287.6,517.6 295.6,504.4 303.5,496.4 311.5,518.0 319.4,530.7 327.4,550.6 335.3,540.9 343.3,539.7 351.2,541.7 359.2,511.2 367.1,512.1 375.1,520.5 383.1,540.4 391.0,535.3 399.0,516.3 406.9,517.5 414.9,508.7 422.8,519.7 430.8,510.4 438.7,476.4 446.7,490.8 454.6,478.1 462.6,468.4 470.6,480.7 478.5,484.9 486.5,481.5 494.4,472.5 502.4,490.8 510.3,503.6 518.3,505.3 526.2,493.4 534.2,486.3 542.1,496.4 550.1,492.5 558.1,493.4 566.0,504.4 574.0,521.4 581.9,517.6 589.9,540.4 597.8,536.7 605.8,524.8 613.7,544.8 621.7,522.2 629.6,524.3 637.6,530.7 645.5,504.4 653.5,498.8 661.5,480.3 669.4,472.2 677.4,482.0 685.3,495.6 693.3,473.9 701.2,481.5 709.2,476.9 717.1,481.5 717.1,483.5" fill="#555" clip-path="url(#ct)"/>
<polygon points="0,531.5 0.0,496.8 9.2,505.3 17.1,498.0 25.1,499.7 33.1,507.0 41.0,518.0 49.0,525.1 56.9,488.6 64.9,498.5 72.8,533.3 80.8,510.4 88.7,526.5 96.7,521.4 104.7,494.2 112.6,507.0 120.6,530.4 128.5,532.4 136.5,524.8 144.4,518.3 152.4,530.7 160.3,507.8 168.3,477.6 176.2,476.1 184.2,479.0 192.2,489.1 200.1,479.5 208.1,484.6 216.0,477.3 224.0,494.6 231.9,479.0 239.9,479.8 247.8,479.0 255.8,484.1 263.7,484.1 271.7,498.5 279.6,534.6 287.6,517.6 295.6,504.4 303.5,496.4 311.5,518.0 319.4,530.7 327.4,550.6 335.3,540.9 343.3,539.7 351.2,541.7 359.2,511.2 367.1,512.1 375.1,520.5 383.1,540.4 391.0,535.3 399.0,516.3 406.9,517.5 414.9,508.7 422.8,519.7 430.8,510.4 438.7,476.4 446.7,490.8 454.6,478.1 462.6,468.4 470.6,480.7 478.5,484.9 486.5,481.5 494.4,472.5 502.4,490.8 510.3,503.6 518.3,505.3 526.2,493.4 534.2,486.3 542.1,496.4 550.1,492.5 558.1,493.4 566.0,504.4 574.0,521.4 581.9,517.6 589.9,540.4 597.8,536.7 605.8,524.8 613.7,544.8 621.7,522.2 629.6,524.3 637.6,530.7 645.5,504.4 653.5,498.8 661.5,480.3 669.4,472.2 677.4,482.0 685.3,495.6 693.3,473.9 701.2,481.5 709.2,476.9 717.1,481.5 717.1,531.5" fill="#555" clip-path="url(#cb)"/>
<path d="M158.5 494.3V483.8M153.5 488.8L158.5 483.3L163.5 488.8" stroke="#808080" stroke-width="1" fill="none"/>
<path transform="translate(188 488.8)" d="M-1.14,-4.76L-1.03,-6.52L1.03,-6.52L1.14,-4.76L2.56,-4.18L3.88,-5.34L5.34,-3.88L4.18,-2.56L4.76,-1.14L6.52,-1.03L6.52,1.03L4.76,1.14L4.18,2.56L5.34,3.88L3.88,5.34L2.56,4.18L1.14,4.76L1.03,6.52L-1.03,6.52L-1.14,4.76L-2.56,4.18L-3.88,5.34L-5.34,3.88L-4.18,2.56L-4.76,1.14L-6.52,1.03L-6.52,-1.03L-4.76,-1.14L-4.18,-2.56L-5.34,-3.88L-3.88,-5.34L-2.56,-4.18ZM0,-2.2a2.2,2.2 0 1 0 .01,0z" fill="#8c8c8c" fill-rule="evenodd"/>
<path d="M211.7 484.3L220.7 493.3M220.7 484.3L211.7 493.3" stroke="#7c7c7c" stroke-width="1.7" fill="none"/>
<polyline points="0.0,496.8 9.2,505.3 17.1,498.0 25.1,499.7 33.1,507.0 41.0,518.0 49.0,525.1 56.9,488.6 64.9,498.5 72.8,533.3 80.8,510.4 88.7,526.5 96.7,521.4 104.7,494.2 112.6,507.0 120.6,530.4 128.5,532.4 136.5,524.8 144.4,518.3 152.4,530.7 160.3,507.8 168.3,477.6 176.2,476.1 184.2,479.0 192.2,489.1 200.1,479.5 208.1,484.6 216.0,477.3 224.0,494.6 231.9,479.0 239.9,479.8 247.8,479.0 255.8,484.1 263.7,484.1 271.7,498.5 279.6,534.6 287.6,517.6 295.6,504.4 303.5,496.4 311.5,518.0 319.4,530.7 327.4,550.6 335.3,540.9 343.3,539.7 351.2,541.7 359.2,511.2 367.1,512.1 375.1,520.5 383.1,540.4 391.0,535.3 399.0,516.3 406.9,517.5 414.9,508.7 422.8,519.7 430.8,510.4 438.7,476.4 446.7,490.8 454.6,478.1 462.6,468.4 470.6,480.7 478.5,484.9 486.5,481.5 494.4,472.5 502.4,490.8 510.3,503.6 518.3,505.3 526.2,493.4 534.2,486.3 542.1,496.4 550.1,492.5 558.1,493.4 566.0,504.4 574.0,521.4 581.9,517.6 589.9,540.4 597.8,536.7 605.8,524.8 613.7,544.8 621.7,522.2 629.6,524.3 637.6,530.7 645.5,504.4 653.5,498.8 661.5,480.3 669.4,472.2 677.4,482.0 685.3,495.6 693.3,473.9 701.2,481.5 709.2,476.9 717.1,481.5" fill="none" stroke="#f2f2f2" stroke-width="1.15" stroke-linejoin="round"/>
<g fill="#fff" font-size="11" font-weight="bold" text-anchor="middle">
<text x="52.5" y="372.4">may</text>
<text x="126.5" y="372.4">14</text>
<text x="227.5" y="372.4">jun</text>
<text x="303.5" y="372.4">14</text>
<text x="394.5" y="372.4">jul</text>
<text x="470.5" y="372.4">14</text>
<text x="562.5" y="372.4">ago</text>
<text x="637.5" y="372.4">14</text>
<text x="737.5" y="372.4">sept</text>
<text x="844.5" y="372.4">14</text>
</g>
<g fill="#fff" font-size="10" stroke="#fff" stroke-width="0.3">
<text x="872" y="127.1">950,00</text>
<text x="872" y="178.1">900,00</text>
<text x="872" y="229.1">850,00</text>
<text x="872" y="279.40000000000003">800,00</text>
<text x="872" y="329.8">750,00</text>
<rect x="860" y="199.3" width="46" height="16" fill="#000" stroke="none"/>
<text x="872" y="210.9">867,68</text>
<rect x="860" y="303.5" width="46" height="16" fill="#000" stroke="none"/>
<text x="872" y="315.1">765,23</text>
</g>
<g fill="#fff" font-size="10" font-weight="bold">
<text x="872" y="394.1">50</text>
<text x="872" y="450.1">0</text>
<text x="872" y="535.1">-80</text>
</g>
<path d="M858 103L866.5 95H903.0Q905.5 95 905.5 97.5V108.5Q905.5 111 903.0 111H866.5Z" fill="#fff"/>
<text x="872" y="106.6" font-size="10" fill="#111">970,14</text>
<path d="M858 135.5L866.5 127.5H903.0Q905.5 127.5 905.5 130.0V141.0Q905.5 143.5 903.0 143.5H866.5Z" fill="#b92d0d"/>
<text x="872" y="139.1" font-size="10" fill="#fff">938,00</text>
<path d="M858 161L866.5 153H903.0Q905.5 153 905.5 155.5V166.5Q905.5 169 903.0 169H866.5Z" fill="#8cbf7a"/>
<text x="872" y="164.6" font-size="10" fill="#fff">912,68</text>
<path d="M858 233.5L866.5 225.5H903.0Q905.5 225.5 905.5 228.0V239.0Q905.5 241.5 903.0 241.5H866.5Z" fill="#5b7cc0"/>
<text x="872" y="237.1" font-size="10" fill="#fff">841,66</text>
<path d="M858 409.5L866.5 401.5H897.5Q900.0 401.5 900.0 404.0V415.0Q900.0 417.5 897.5 417.5H866.5Z" fill="#fff"/>
<text x="872" y="413.1" font-size="10" fill="#111">32,43</text>
<path d="M858 420L866.5 412H897.5Q900.0 412 900.0 414.5V425.5Q900.0 428 897.5 428H866.5Z" fill="#f00"/>
<text x="872" y="423.6" font-size="10" fill="#200">23,37</text>
<path d="M858 482L866.5 474H900.5Q903.0 474 903.0 476.5V487.5Q903.0 490 900.5 490H866.5Z" fill="#fff"/>
<text x="872" y="485.6" font-size="10" fill="#111">-18,82</text>
<rect x="9" y="108" width="92" height="21.5" fill="#808080"/>
<text x="19" y="123.05" font-size="12" fill="#fff" stroke="#fff" stroke-width="0.35">SALFACORP</text>
<rect x="9" y="390" width="107" height="22" fill="#808080"/>
<text x="19" y="405.3" font-size="12" fill="#fff" stroke="#fff" stroke-width="0.35">MACD (12,26,9)</text>
<rect x="9" y="478" width="125" height="22" fill="#808080"/>
<text x="19" y="493.3" font-size="12" fill="#fff" stroke="#fff" stroke-width="0.35">WILLIAMS %R (14)</text>
<path d="M140.5 406.3V395.8M135.5 400.8L140.5 395.3L145.5 400.8" stroke="#999" stroke-width="1" fill="none"/>
<path d="M169.5 395.3V405.8M164.5 400.8L169.5 406.3L174.5 400.8" stroke="#666" stroke-width="1" fill="none"/>
<path transform="translate(198.8 400.8)" d="M-1.14,-4.76L-1.03,-6.52L1.03,-6.52L1.14,-4.76L2.56,-4.18L3.88,-5.34L5.34,-3.88L4.18,-2.56L4.76,-1.14L6.52,-1.03L6.52,1.03L4.76,1.14L4.18,2.56L5.34,3.88L3.88,5.34L2.56,4.18L1.14,4.76L1.03,6.52L-1.03,6.52L-1.14,4.76L-2.56,4.18L-3.88,5.34L-5.34,3.88L-4.18,2.56L-4.76,1.14L-6.52,1.03L-6.52,-1.03L-4.76,-1.14L-4.18,-2.56L-5.34,-3.88L-3.88,-5.34L-2.56,-4.18ZM0,-2.2a2.2,2.2 0 1 0 .01,0z" fill="#aaa" fill-rule="evenodd"/>
<path d="M223.1 396.3L232.1 405.3M232.1 396.3L223.1 405.3" stroke="#aaa" stroke-width="1.7" fill="none"/>
</svg>
<div class="side"><div class="tab"><b></b><svg width="29" height="110" style="position:absolute;left:0;top:0" font-family="'Liberation Sans', Arial, sans-serif"><text transform="translate(20.2 96.8) rotate(-90) scale(0.7 1)" font-size="12.6" font-weight="bold" fill="#b0b0b0" letter-spacing="1.55">WATCHLISTS</text></svg></div></div>
<div class="bot"><i></i></div>
</div>
</body></html>
